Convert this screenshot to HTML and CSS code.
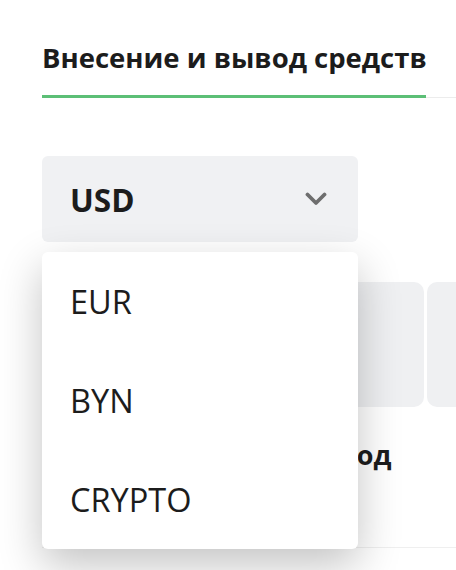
FILE: index.html
```html
<!DOCTYPE html>
<html lang="ru">
<head>
    <meta charset="UTF-8">
    <meta name="viewport" content="width=device-width, initial-scale=1.0">
    <title>Внесение и вывод средств</title>
    <link rel="stylesheet" href="styles.css">
</head>
<body>
<div class="page">
    <div class="tabs">
        <div class="tab active">Внесение и вывод средств</div>
    </div>

    <div class="currency">
        <div class="select">
            <span class="select-value">USD</span>
            <svg class="chevron" width="22" height="14" viewBox="0 0 22 14">
                <path d="M2.5 2.5 L11 11 L19.5 2.5" fill="none" stroke="#6e6e6e" stroke-width="3.8" stroke-linecap="round" stroke-linejoin="round"/>
            </svg>
        </div>

        <ul class="dropdown">
            <li>EUR</li>
            <li>BYN</li>
            <li>CRYPTO</li>
        </ul>
    </div>

    <div class="methods">
        <div class="method">
            <div class="method-card"></div>
            <div class="method-name">Карта</div>
        </div>
        <div class="method">
            <div class="method-card"></div>
            <div class="method-name">Банк</div>
        </div>
        <div class="method">
            <div class="method-card"></div>
            <div class="method-name">Вывод</div>
        </div>
        <div class="method">
            <div class="method-card"></div>
        </div>
    </div>

    <div class="divider"></div>
</div>
</body>
</html>
```

FILE: styles.css
```css
body {
    margin: 0;
    background-color: #fff;
    font-family: "Open Sans", "Noto Sans", sans-serif;
    color: #1c1c1c;
}

.page {
    width: 456px;
    height: 570px;
    overflow: hidden;
    padding-left: 42px;
    box-sizing: border-box;
}

.tabs {
    display: flex;
    border-bottom: 1px solid #ececec;
    margin-right: -42px;
}

.tab {
    width: 384px;
    padding-top: 40px;
    padding-bottom: 19px;
    margin-bottom: -1px;
    font-size: 27.5px;
    font-weight: bold;
    line-height: 36px;
    white-space: nowrap;
}

.tab.active {
    border-bottom: 3px solid #5cbf76;
}

.currency {
    position: relative;
    width: 316px;
    margin-top: 58px;
}

.select {
    height: 86px;
    display: flex;
    align-items: center;
    justify-content: space-between;
    padding: 0 31px 0 28px;
    background-color: #f0f1f3;
    border-radius: 6px;
}

.select-value {
    font-size: 31.5px;
    font-weight: bold;
}

.chevron {
    display: block;
}

.dropdown {
    position: absolute;
    top: calc(100% + 10px);
    left: 0;
    right: 0;
    z-index: 2;
    margin: 0;
    padding: 0;
    list-style: none;
    background-color: #fff;
    border-radius: 6px;
    box-shadow: 0 16px 44px rgba(0, 0, 0, 0.24);
}

.dropdown li {
    height: 99px;
    display: flex;
    align-items: center;
    padding: 0 28px;
    font-size: 32.5px;
}

.methods {
    display: flex;
    gap: 3px;
    margin-top: 40px;
}

.method {
    flex: 0 0 125.33px;
}

.method-card {
    height: 125px;
    background-color: #eff0f2;
    border-radius: 10px;
}

.method-name {
    margin-top: 30px;
    font-size: 27px;
    font-weight: bold;
    line-height: 36px;
    white-space: nowrap;
}

.divider {
    margin-top: 74px;
    margin-right: -42px;
    border-top: 1px solid #efefef;
}
```
